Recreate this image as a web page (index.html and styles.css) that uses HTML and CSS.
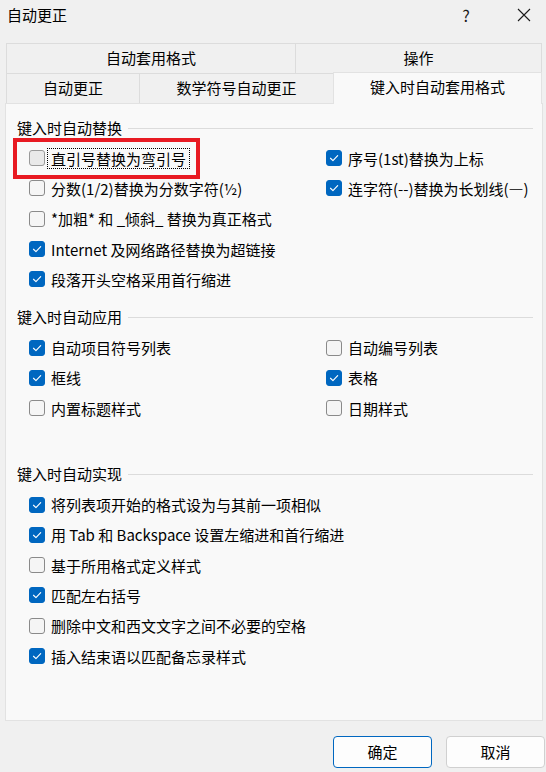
FILE: index.html
```html
<!DOCTYPE html>
<html lang="zh-CN">
<head>
<meta charset="utf-8">
<title>自动更正</title>
<link rel="stylesheet" href="styles.css">
</head>
<body>
<div class="window">
  <div class="titlebar">
    <div class="title">自动更正</div>
    <div class="help">?</div>
    <div class="close">
      <svg width="14" height="14" viewBox="0 0 14 14"><path d="M1 1 L13 13 M13 1 L1 13" stroke="#1a1a1a" stroke-width="1.1" fill="none"/></svg>
    </div>
  </div>

  <div class="tabs">
    <div class="tabrow">
      <div class="tab t-auto">自动套用格式</div>
      <div class="tab t-op">操作</div>
    </div>
    <div class="tabrow">
      <div class="tab t-ac">自动更正</div>
      <div class="tab t-math">数学符号自动更正</div>
      <div class="tab t-type selected">键入时自动套用格式</div>
    </div>
  </div>

  <div class="panel">
    <div class="group-head"><span>键入时自动替换</span></div>
    <div class="grid">
      <label class="item"><span class="box focusbox"></span><span class="txt focus">直引号替换为弯引号</span></label>
      <label class="item"><span class="box on"><svg viewBox="0 0 16 16"><path d="M4 8.3 L6.8 11 L12.2 5.4"/></svg></span><span class="txt">序号(1st)替换为上标</span></label>
      <label class="item"><span class="box"></span><span class="txt">分数(1/2)替换为分数字符(½)</span></label>
      <label class="item"><span class="box on"><svg viewBox="0 0 16 16"><path d="M4 8.3 L6.8 11 L12.2 5.4"/></svg></span><span class="txt">连字符(--)替换为长划线(—)</span></label>
      <label class="item wide"><span class="box"></span><span class="txt">*加粗* 和 _倾斜_ 替换为真正格式</span></label>
      <label class="item wide"><span class="box on"><svg viewBox="0 0 16 16"><path d="M4 8.3 L6.8 11 L12.2 5.4"/></svg></span><span class="txt">Internet 及网络路径替换为超链接</span></label>
      <label class="item wide"><span class="box on"><svg viewBox="0 0 16 16"><path d="M4 8.3 L6.8 11 L12.2 5.4"/></svg></span><span class="txt">段落开头空格采用首行缩进</span></label>
    </div>

    <div class="group-head g2"><span>键入时自动应用</span></div>
    <div class="grid">
      <label class="item"><span class="box on"><svg viewBox="0 0 16 16"><path d="M4 8.3 L6.8 11 L12.2 5.4"/></svg></span><span class="txt">自动项目符号列表</span></label>
      <label class="item"><span class="box"></span><span class="txt">自动编号列表</span></label>
      <label class="item"><span class="box on"><svg viewBox="0 0 16 16"><path d="M4 8.3 L6.8 11 L12.2 5.4"/></svg></span><span class="txt">框线</span></label>
      <label class="item"><span class="box on"><svg viewBox="0 0 16 16"><path d="M4 8.3 L6.8 11 L12.2 5.4"/></svg></span><span class="txt">表格</span></label>
      <label class="item"><span class="box"></span><span class="txt">内置标题样式</span></label>
      <label class="item"><span class="box"></span><span class="txt">日期样式</span></label>
    </div>

    <div class="group-head g3"><span>键入时自动实现</span></div>
    <div class="list">
      <label class="item"><span class="box on"><svg viewBox="0 0 16 16"><path d="M4 8.3 L6.8 11 L12.2 5.4"/></svg></span><span class="txt">将列表项开始的格式设为与其前一项相似</span></label>
      <label class="item"><span class="box on"><svg viewBox="0 0 16 16"><path d="M4 8.3 L6.8 11 L12.2 5.4"/></svg></span><span class="txt">用 Tab 和 Backspace 设置左缩进和首行缩进</span></label>
      <label class="item"><span class="box"></span><span class="txt">基于所用格式定义样式</span></label>
      <label class="item"><span class="box on"><svg viewBox="0 0 16 16"><path d="M4 8.3 L6.8 11 L12.2 5.4"/></svg></span><span class="txt">匹配左右括号</span></label>
      <label class="item"><span class="box"></span><span class="txt">删除中文和西文文字之间不必要的空格</span></label>
      <label class="item"><span class="box on"><svg viewBox="0 0 16 16"><path d="M4 8.3 L6.8 11 L12.2 5.4"/></svg></span><span class="txt">插入结束语以匹配备忘录样式</span></label>
    </div>
  </div>

  <div class="buttons">
    <div class="btn primary">确定</div>
    <div class="btn">取消</div>
  </div>

  <div class="highlight"></div>
</div>
</body>
</html>
```

FILE: styles.css
```css
* { box-sizing: border-box; }

html, body {
  margin: 0;
  padding: 0;
  background: #f0f0f0;
}

body {
  width: 546px;
  height: 772px;
  overflow: hidden;
  font-family: "Noto Sans CJK SC", "Noto Sans", sans-serif;
  font-size: 15px;
  color: #000;
}

.window {
  position: relative;
  width: 546px;
  height: 772px;
}

.titlebar {
  height: 43px;
  display: flex;
  align-items: flex-start;
  padding-top: 4px;
}

.title {
  padding-left: 7px;
  line-height: 22px;
  flex: 1;
}

.help {
  width: 20px;
  text-align: center;
  line-height: 22px;
  font-size: 16px;
  margin-right: 41px;
  color: #1a1a1a;
}

.close {
  width: 14px;
  height: 14px;
  margin-top: 4px;
  margin-right: 15px;
}

.close svg { display: block; }

.tabs {
  margin-left: 6px;
  width: 536px;
}

.tabrow {
  display: flex;
  height: 30px;
}

.tab {
  height: 30px;
  line-height: 28px;
  text-align: center;
  border: 1px solid #dcdcdc;
  border-bottom: none;
  background: #f0f0f0;
  margin-right: -1px;
}

.t-auto { width: 290px; }
.t-op { width: 247px; }
.t-ac { width: 134px; }
.t-math { width: 195px; }
.t-type { width: 209px; }

.tab.selected {
  background: #f9f9f9;
  margin-top: -1px;
  height: 32px;
  position: relative;
  z-index: 2;
  border-color: #e2e2e2;
}

.panel {
  margin-left: 5px;
  width: 538px;
  height: 618px;
  background: #f9f9f9;
  border: 1px solid #e2e2e2;
  padding-top: 14px;
}

.group-head {
  display: flex;
  align-items: center;
  height: 20px;
  padding-left: 11px;
  padding-right: 9px;
  line-height: 20px;
}

.group-head::after {
  content: "";
  flex: 1;
  height: 1px;
  background: #dcdcdc;
  margin-left: 6px;
}

.g2 { margin-top: 13px; }
.g3 { margin-top: 41px; }

.grid {
  display: grid;
  grid-template-columns: 297px 1fr;
  padding-left: 23px;
  padding-top: 5px;
}

.list {
  padding-left: 23px;
  padding-top: 5px;
}

.item {
  display: flex;
  align-items: center;
  height: 30.3px;
  white-space: nowrap;
}

.wide { grid-column: 1 / span 2; }

.box {
  width: 16px;
  height: 16px;
  border: 1px solid #8a8a8a;
  border-radius: 3px;
  background: #f5f5f5;
  flex: none;
}

.box.focusbox {
  background: #e9e9e9;
  border-color: #9a9a9a;
}

.box.on {
  background: #0067c0;
  border-color: #0067c0;
}

.box svg {
  display: block;
  width: 14px;
  height: 14px;
}

.box svg path {
  fill: none;
  stroke: #fff;
  stroke-width: 1.3;
  stroke-linecap: round;
  stroke-linejoin: round;
}

.txt {
  margin-left: 3px;
  padding: 0 3px;
  line-height: 19px;
}

.txt.focus {
  outline: 1px dotted #000;
  outline-offset: 0;
}

.buttons {
  display: flex;
  justify-content: flex-end;
  gap: 14px;
  padding-right: 1px;
  margin-top: 15px;
}

.btn {
  width: 99px;
  height: 32px;
  border: 1px solid #d0d0d0;
  border-radius: 4px;
  background: #fdfdfd;
  text-align: center;
  line-height: 30px;
}

.btn.primary {
  border-color: #0067c0;
}

.highlight {
  position: absolute;
  left: 13px;
  top: 138px;
  width: 187px;
  height: 41px;
  border: 4px solid #e81a22;
}
```
